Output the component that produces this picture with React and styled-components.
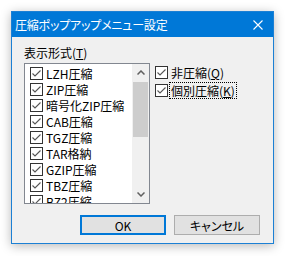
import styled, { createGlobalStyle } from "styled-components";

const GlobalStyle = createGlobalStyle`
  body {
    margin: 0;
    background: #ffffff;
    font-family: "Noto Sans CJK JP", "Noto Sans", sans-serif;
    font-size: 12px;
    color: #000;
  }
`;

const Page = styled.div`
  width: 286px;
  height: 256px;
  padding: 11px;
  box-sizing: border-box;
`;

const Window = styled.div`
  width: 263px;
  height: 233px;
  box-sizing: border-box;
  border: 1px solid #1c80d4;
  background: #f0f0f0;
  box-shadow: 0 2px 10px rgba(0, 0, 0, 0.28);
  display: flex;
  flex-direction: column;
`;

const TitleBar = styled.div`
  height: 25px;
  background: #0078d7;
  color: #fff;
  display: flex;
  align-items: center;
  justify-content: space-between;
  padding: 0 10px 0 3px;
  font-size: 12px;
  font-feature-settings: "palt";
  letter-spacing: -0.2px;
`;

const Body = styled.div`
  flex: 1;
  display: flex;
  flex-direction: column;
  padding: 8px 13px 0 12px;
`;

const Main = styled.div`
  display: flex;
  gap: 5px;
`;

const Column = styled.div`
  display: flex;
  flex-direction: column;
`;

const Label = styled.div`
  height: 16px;
  line-height: 16px;
  margin-bottom: 2px;
`;

const ListBox = styled.div`
  width: 126px;
  height: 141px;
  box-sizing: border-box;
  border: 1px solid #828790;
  background: #fff;
  display: flex;
  overflow: hidden;
`;

const Items = styled.div`
  flex: 1;
  padding: 1px 0 0 5px;
  overflow: hidden;
`;

const Item = styled.div`
  height: 16px;
  display: flex;
  align-items: center;
  gap: 3px;
  white-space: nowrap;
`;

const ScrollBar = styled.div`
  width: 17px;
  background: #f0f0f0;
  display: flex;
  flex-direction: column;
`;

const Arrow = styled.div`
  height: 17px;
  display: flex;
  align-items: center;
  justify-content: center;
`;

const Thumb = styled.div`
  height: 55px;
  margin: 1px 1px 0;
  background: #cdcdcd;
`;

const Options = styled.div`
  display: flex;
  flex-direction: column;
  gap: 1px;
  padding-top: 19px;
`;

const Option = styled.div`
  height: 17px;
  display: flex;
  align-items: center;
  gap: 2px;
  white-space: nowrap;
`;

const OptionText = styled.span`
  padding: 0 1px;
  line-height: 15px;
  outline: ${({ focused }) => (focused ? "1px dotted #000" : "none")};
`;

const Buttons = styled.div`
  display: flex;
  justify-content: flex-end;
  gap: 8px;
  margin-top: 11px;
`;

const Button = styled.div`
  width: 86px;
  height: 20px;
  box-sizing: border-box;
  background: #e1e1e1;
  border: ${({ primary }) => (primary ? "2px solid #0078d7" : "1px solid #adadad")};
  display: flex;
  align-items: center;
  justify-content: center;
  font-feature-settings: "palt";
`;

const U = styled.span`
  text-decoration: underline;
`;

function CheckBox() {
  return (
    <svg width="13" height="13" viewBox="0 0 13 13">
      <rect x="0.5" y="0.5" width="12" height="12" fill="#fff" stroke="#333" />
      <path d="M2.5 6.5 L5 9 L10.5 3.5" fill="none" stroke="#555" strokeWidth="1.1" />
    </svg>
  );
}

const formats = [
  "LZH圧縮",
  "ZIP圧縮",
  "暗号化ZIP圧縮",
  "CAB圧縮",
  "TGZ圧縮",
  "TAR格納",
  "GZIP圧縮",
  "TBZ圧縮",
  "BZ2圧縮",
];

export default function App() {
  return (
    <Page>
      <GlobalStyle />
      <Window>
        <TitleBar>
          <span>圧縮ポップアップメニュー設定</span>
          <svg width="10" height="10" viewBox="0 0 10 10">
            <path d="M0.5 0.5 L9.5 9.5 M9.5 0.5 L0.5 9.5" stroke="#fff" strokeWidth="1.1" />
          </svg>
        </TitleBar>
        <Body>
          <Main>
            <Column>
              <Label>
                表示形式(<U>T</U>)
              </Label>
              <ListBox>
                <Items>
                  {formats.map((f) => (
                    <Item key={f}>
                      <CheckBox />
                      <span>{f}</span>
                    </Item>
                  ))}
                </Items>
                <ScrollBar>
                  <Arrow>
                    <svg width="8" height="5" viewBox="0 0 8 5">
                      <path d="M0.5 4.5 L4 1 L7.5 4.5" fill="none" stroke="#606060" strokeWidth="1.5" />
                    </svg>
                  </Arrow>
                  <Thumb />
                  <div style={{ flex: 1 }} />
                  <Arrow>
                    <svg width="8" height="5" viewBox="0 0 8 5">
                      <path d="M0.5 0.5 L4 4 L7.5 0.5" fill="none" stroke="#606060" strokeWidth="1.5" />
                    </svg>
                  </Arrow>
                </ScrollBar>
              </ListBox>
            </Column>
            <Options>
              <Option>
                <CheckBox />
                <OptionText>
                  非圧縮(<U>Q</U>)
                </OptionText>
              </Option>
              <Option>
                <CheckBox />
                <OptionText focused>
                  個別圧縮(<U>K</U>)
                </OptionText>
              </Option>
            </Options>
          </Main>
          <Buttons>
            <Button primary>OK</Button>
            <Button>キャンセル</Button>
          </Buttons>
        </Body>
      </Window>
    </Page>
  );
}
